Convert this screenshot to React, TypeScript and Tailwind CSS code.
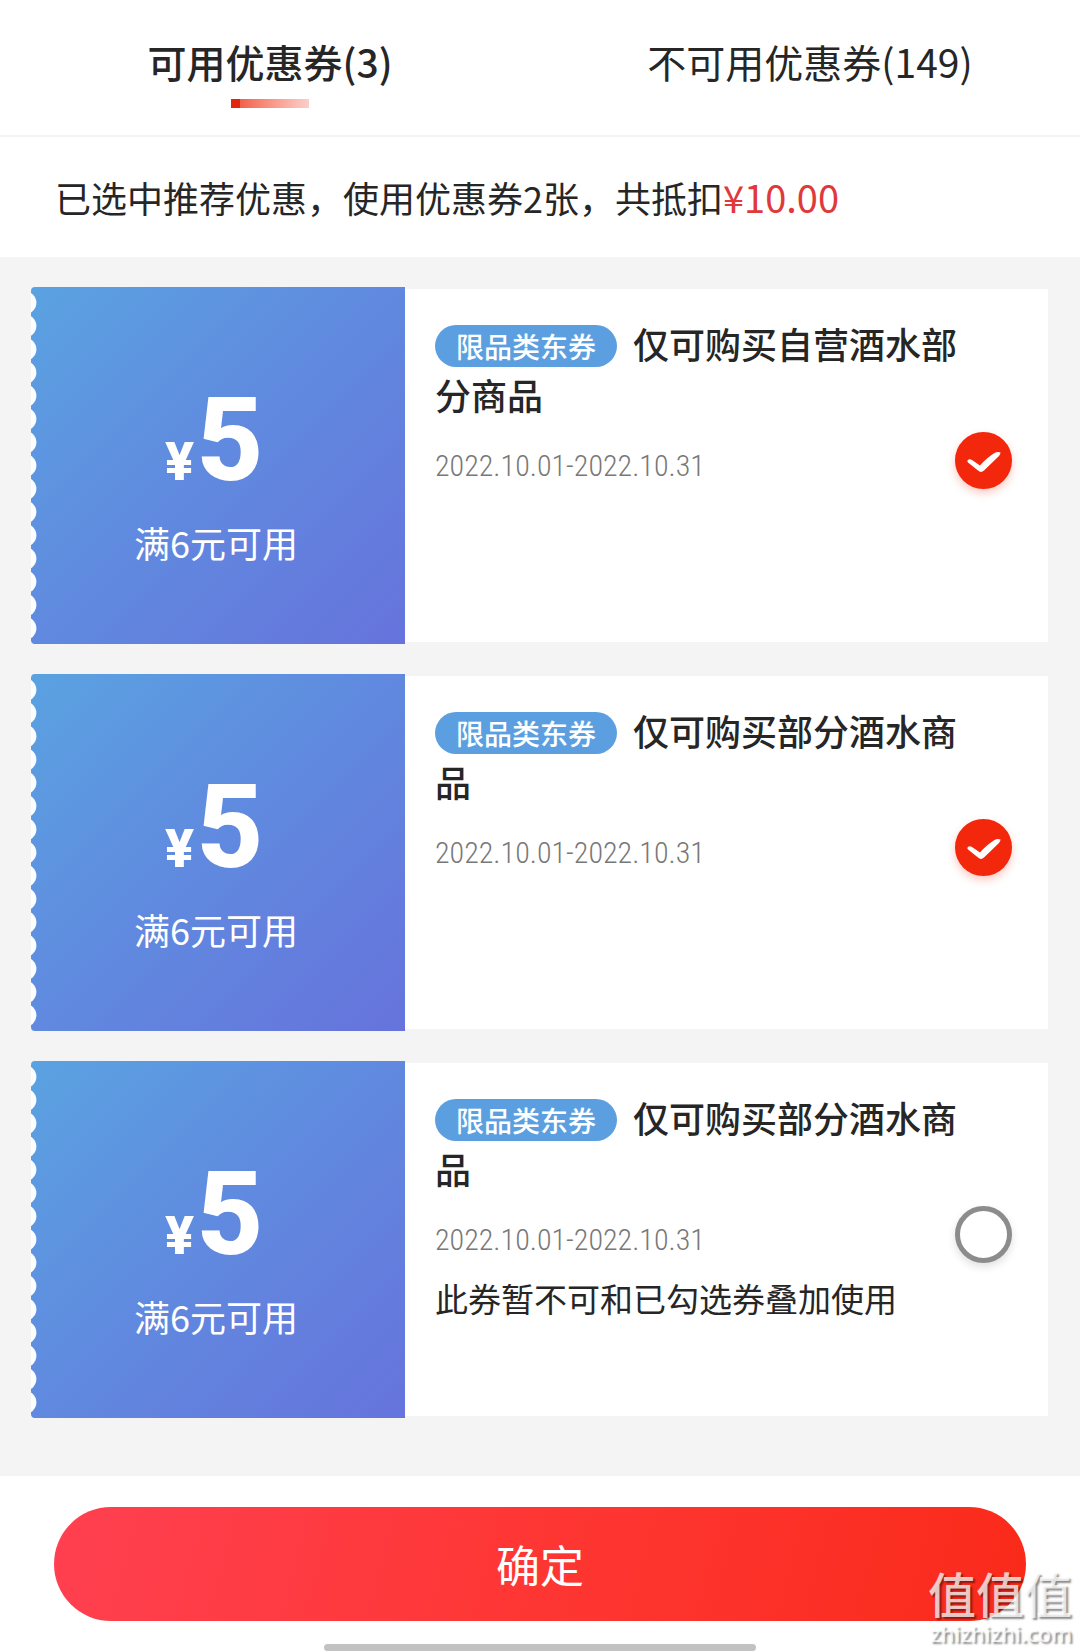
import { useState } from 'react';

interface Coupon {
  id: number;
  amount: number;
  threshold: number;
  tag: string;
  title: string;
  period: string;
  note?: string;
}

const coupons: Coupon[] = [
  { id: 1, amount: 5, threshold: 6, tag: '限品类东券', title: '仅可购买自营酒水部分商品', period: '2022.10.01-2022.10.31' },
  { id: 2, amount: 5, threshold: 6, tag: '限品类东券', title: '仅可购买部分酒水商品', period: '2022.10.01-2022.10.31' },
  {
    id: 3,
    amount: 5,
    threshold: 6,
    tag: '限品类东券',
    title: '仅可购买部分酒水商品',
    period: '2022.10.01-2022.10.31',
    note: '此券暂不可和已勾选券叠加使用',
  },
];

const tabs = [
  { key: 'usable', label: '可用优惠券', count: 3 },
  { key: 'unusable', label: '不可用优惠券', count: 149 },
];

// Scalloped left edge of the ticket
function TicketEdge() {
  return (
    <svg className="absolute left-0 top-0 h-full w-1.5" viewBox="0 0 6 357" preserveAspectRatio="none" aria-hidden="true">
      {Array.from({ length: 15 }, (_, i) => (
        <circle key={i} cx="-6" cy={15.7 + i * 23.26} r="11.4" fill="#fbfdff" />
      ))}
    </svg>
  );
}

interface CouponCardProps {
  coupon: Coupon;
  checked: boolean;
  onToggle: () => void;
}

function CouponCard({ coupon, checked, onToggle }: CouponCardProps) {
  const titleId = `coupon-${coupon.id}`;

  return (
    <li className="flex items-stretch">
      <div className="relative flex min-h-[357px] w-[374px] shrink-0 flex-col items-center justify-center overflow-hidden rounded-l bg-linear-135 from-[#5aa2e1] via-[#6089df] to-[#6673dc] pt-5 text-white">
        <TicketEdge />
        <div className="flex items-baseline gap-0.5 pr-2 leading-[110px]">
          <span className="font-['Inter',sans-serif] text-[52px] font-extrabold">¥</span>
          <span className="font-['Roboto',sans-serif] text-[116px] font-extrabold">{coupon.amount}</span>
        </div>
        <div className="pr-1 text-[36px] leading-[50px]">满{coupon.threshold}元可用</div>
      </div>

      <div className="my-0.5 flex min-w-0 flex-1 bg-white pl-[30px] pr-9">
        <div className="min-w-0 flex-1 pt-[29px]">
          <h2 id={titleId} className="text-[36px] font-medium leading-[51px]">
            <span className="mr-4 inline-flex h-[42px] items-center rounded-full bg-[#5c9fe0] px-[21px] align-[1px] text-[28px] leading-[42px] text-white">
              {coupon.tag}
            </span>
            {coupon.title}
          </h2>
          <p className="mt-6 font-['Roboto_Condensed','Roboto',sans-serif] text-[30px] font-light leading-[44px] text-[#787878]">
            {coupon.period}
          </p>
          {coupon.note && <p className="mt-3.5 text-[33px] leading-[44px]">{coupon.note}</p>}
        </div>

        <div className="relative -ml-1 mb-2.5 h-[57px] w-[57px] shrink-0 self-center">
          <input
            type="checkbox"
            aria-labelledby={titleId}
            checked={checked}
            onChange={onToggle}
            className="block h-full w-full appearance-none rounded-full border-[5px] border-[#8c8c8c] bg-white shadow-[0_4px_8px_rgba(0,0,0,0.12)] checked:border-[#f2270c] checked:bg-[#f2270c] checked:shadow-[0_4px_8px_rgba(242,39,12,0.25)]"
          />
          {checked && (
            <svg className="pointer-events-none absolute inset-0" viewBox="0 0 57 57" aria-hidden="true">
              <path
                d="M12.5 28.5Q14.5 26.2 17 28L25 33.5Q32 25.5 39.5 21Q42.5 19.5 45.5 20.5Q45.5 22 44 24L29 38.5Q26 41.3 23 38.5L13 30.5Q12 29.5 12.5 28.5Z"
                fill="white"
              />
            </svg>
          )}
        </div>
      </div>
    </li>
  );
}

export default function App() {
  const [activeTab, setActiveTab] = useState('usable');
  const [selected, setSelected] = useState<number[]>([1, 2]);

  const toggle = (id: number) => {
    setSelected((prev) => (prev.includes(id) ? prev.filter((x) => x !== id) : [...prev, id]));
  };

  const discount = coupons.filter((c) => selected.includes(c.id)).reduce((sum, c) => sum + c.amount, 0);

  return (
    <div className="flex min-h-screen flex-col bg-white font-['Noto_Sans_CJK_SC',sans-serif] text-[#262626]">
      {/* Tabs */}
      <nav className="grid grid-cols-2 border-b-2 border-[#f3f3f3]">
        {tabs.map((tab) => (
          <button
            key={tab.key}
            onClick={() => setActiveTab(tab.key)}
            className={`flex h-[135px] flex-col items-center pt-[34px] text-[39px] leading-[54px] ${activeTab === tab.key ? 'font-medium' : 'font-normal'}`}
          >
            {tab.label}({tab.count})
            {activeTab === tab.key && (
              <span className="mt-[11px] flex h-[9px] w-[78px]">
                <span className="w-[9px] bg-[#e2270f]" />
                <span className="flex-1 bg-linear-to-r from-[#f2604a] to-[#f9cfcb]" />
              </span>
            )}
          </button>
        ))}
      </nav>

      {/* Summary */}
      <p className="px-[55px] py-[34px] text-[36px] leading-[52px]">
        已选中推荐优惠，使用优惠券{selected.length}张，共抵扣<span className="text-[38px] text-[#e0393c]">¥{discount.toFixed(2)}</span>
      </p>

      {/* Coupon list */}
      <main className="flex-1 bg-[#f4f4f4] pb-[58px] pl-[31px] pr-8 pt-[30px]">
        <ul className="flex flex-col gap-[30px]">
          {coupons.map((coupon) => (
            <CouponCard
              key={coupon.id}
              coupon={coupon}
              checked={selected.includes(coupon.id)}
              onToggle={() => toggle(coupon.id)}
            />
          ))}
        </ul>
      </main>

      {/* Confirm bar */}
      <footer className="relative px-[54px] pb-px pt-[31px]">
        <button className="block h-[114px] w-full rounded-full bg-linear-105 from-[#ff4050] via-[#fe3633] to-[#fa2a18] text-[44px] text-white">
          确定
        </button>
        <div className="mx-auto mt-[23px] h-[7px] w-[432px] rounded-full bg-[#c2c2c2]" />

        <div className="pointer-events-none absolute bottom-1.5 right-2 text-right text-white/75 [text-shadow:2px_2px_2px_rgba(0,0,0,0.45)]">
          <div className="text-[48px] font-medium leading-[56px]">值值值</div>
          <div className="font-['Noto_Sans',sans-serif] text-[22px] font-medium leading-[26px]">zhizhizhi.com</div>
        </div>
      </footer>
    </div>
  );
}
